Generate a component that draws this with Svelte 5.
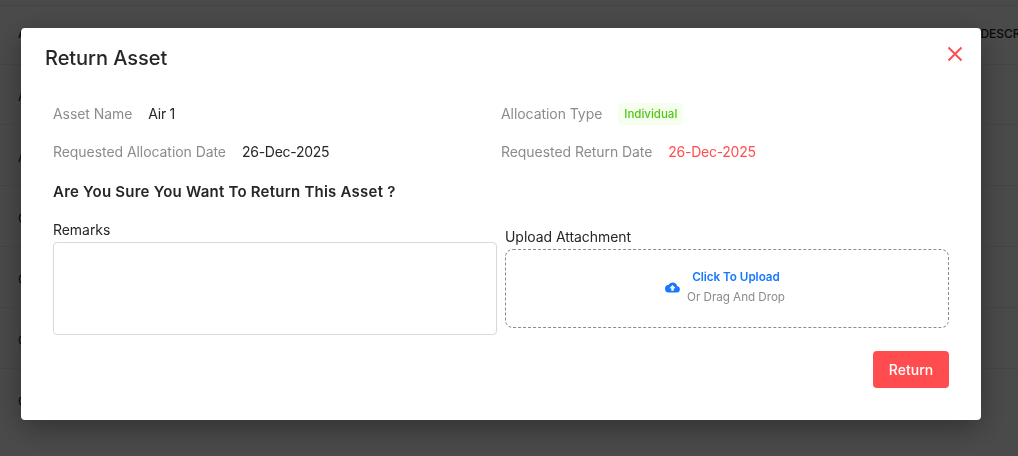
<script>
  const rows = ['A', 'A', 'C', 'C', 'C', 'C'];
</script>

<div class="page">
  <div class="topbar"></div>
  <div class="thead">
    <span>A</span>
    <span class="desc">DESCRIPTION</span>
  </div>
  {#each rows as r}
    <div class="row">{r}</div>
  {/each}
</div>

<div class="overlay">
  <div class="modal" role="dialog" aria-modal="true">
    <button class="close" aria-label="Close">
      <svg width="16" height="16" viewBox="0 0 16 16">
        <path d="M1.5 1.5 14.5 14.5M14.5 1.5 1.5 14.5" stroke="#ff4d4f" stroke-width="2" fill="none" />
      </svg>
    </button>
    <h2>Return Asset</h2>

    <div class="info">
      <div class="item">
        <span class="key">Asset Name</span>
        <span class="val">Air 1</span>
      </div>
      <div class="item">
        <span class="key">Allocation Type</span>
        <span class="tag">Individual</span>
      </div>
      <div class="item">
        <span class="key">Requested Allocation Date</span>
        <span class="val">26-Dec-2025</span>
      </div>
      <div class="item">
        <span class="key">Requested Return Date</span>
        <span class="val red">26-Dec-2025</span>
      </div>
    </div>

    <p class="question">Are You Sure You Want To Return This Asset ?</p>

    <div class="form">
      <label class="field">
        <span class="label">Remarks</span>
        <textarea></textarea>
      </label>
      <div class="field upload-field">
        <span class="label">Upload Attachment</span>
        <div class="dropzone">
          <svg class="cloud" width="15" height="15" viewBox="0 0 24 24">
            <path fill="#1677ff" d="M19.35 10.04A7.49 7.49 0 0 0 12 4a7.5 7.5 0 0 0-6.65 4.04A6 6 0 0 0 6 20h13a5 5 0 0 0 .35-9.96ZM14 13v4h-4v-4H7l5-5 5 5h-3Z" />
          </svg>
          <div class="drop-text">
            <span class="click">Click To Upload</span>
            <span class="drag">Or Drag And Drop</span>
          </div>
        </div>
      </div>
    </div>

    <div class="actions">
      <button class="return">Return</button>
    </div>
  </div>
</div>

<style>
  :global(body) {
    margin: 0;
    overflow: hidden;
    font-family: Inter, "Liberation Sans", sans-serif;
  }

  .page {
    height: 456px;
    background: #fff;
    overflow: hidden;
    font-size: 13px;
    color: #222;
  }

  .topbar {
    height: 5px;
    border-bottom: 1px solid #e8e8e8;
  }

  .thead {
    height: 59px;
    display: flex;
    justify-content: space-between;
    align-items: flex-start;
    padding: 20px 0 0 18px;
    box-sizing: border-box;
    border-bottom: 1px solid #eee;
    font-size: 12px;
    line-height: 16px;
    font-weight: 500;
    white-space: nowrap;
  }

  .desc {
    margin-right: -43px;
  }

  .row {
    height: 60px;
    padding: 23px 0 0 18px;
    box-sizing: border-box;
    border-bottom: 1px solid #eee;
    margin-bottom: 1px;
  }

  .row:last-child {
    border-bottom: none;
  }

  .overlay {
    position: fixed;
    inset: 0;
    background: rgba(0, 0, 0, 0.71);
  }

  .modal {
    position: absolute;
    left: 21px;
    top: 28px;
    width: 960px;
    height: 392px;
    box-sizing: border-box;
    padding: 0 32px;
    background: #fff;
    border-radius: 4px;
    box-shadow: 0 8px 30px rgba(0, 0, 0, 0.35);
    color: #262626;
  }

  .close {
    position: absolute;
    right: 18px;
    top: 18px;
    width: 16px;
    height: 16px;
    padding: 0;
    border: none;
    background: none;
    cursor: pointer;
  }

  h2 {
    margin: 0 0 0 -8px;
    padding-top: 18px;
    font-size: 20px;
    line-height: 24px;
    font-weight: 500;
    letter-spacing: -0.05px;
  }

  .info {
    display: grid;
    grid-template-columns: 448px 1fr;
    row-gap: 16px;
    margin-top: 32px;
  }

  .item {
    display: flex;
    align-items: center;
    gap: 16px;
    height: 22px;
    font-size: 14px;
  }

  .key {
    color: #8c8c8c;
    letter-spacing: -0.06px;
  }

  .val {
    color: #262626;
    letter-spacing: -0.27px;
  }

  .red {
    color: #ff4d4f;
  }

  .tag {
    margin-top: 2px;
    padding: 2px 6px;
    background: #f6ffed;
    color: #52c41a;
    border-radius: 4px;
    font-size: 11.5px;
    font-weight: 500;
    line-height: 18px;
  }

  .question {
    margin: 19px 0 0;
    font-size: 15px;
    line-height: 22px;
    font-weight: 600;
    letter-spacing: 0.23px;
  }

  .form {
    display: grid;
    grid-template-columns: 444px 444px;
    gap: 8px;
    margin-top: 17px;
  }

  .field {
    display: flex;
    flex-direction: column;
    font-size: 14px;
    line-height: 22px;
    letter-spacing: -0.05px;
  }

  .label {
    margin: -1px 0 1px;
  }

  textarea {
    height: 93px;
    box-sizing: border-box;
    border: 1px solid #d9d9d9;
    border-radius: 4px;
    resize: none;
    outline: none;
  }

  .upload-field {
    padding-top: 7px;
  }

  .dropzone {
    height: 79px;
    box-sizing: border-box;
    display: flex;
    align-items: center;
    justify-content: center;
    gap: 7px;
    padding: 0 4px 4px 0;
    border: 1px dashed #8c8c8c;
    border-radius: 8px;
  }

  .cloud {
    margin-top: 2px;
  }

  .drop-text {
    display: flex;
    flex-direction: column;
    align-items: center;
    gap: 2px;
    font-size: 11.7px;
    line-height: 18px;
  }

  .click {
    color: #1677ff;
    font-weight: 600;
  }

  .drag {
    color: #8c8c8c;
  }

  .actions {
    display: flex;
    justify-content: flex-end;
    margin-top: 16px;
  }

  .return {
    width: 76px;
    height: 37px;
    border: none;
    border-radius: 4px;
    background: #ff4d4f;
    color: #fff;
    font-family: inherit;
    font-size: 14px;
    font-weight: 500;
    cursor: pointer;
  }
</style>
